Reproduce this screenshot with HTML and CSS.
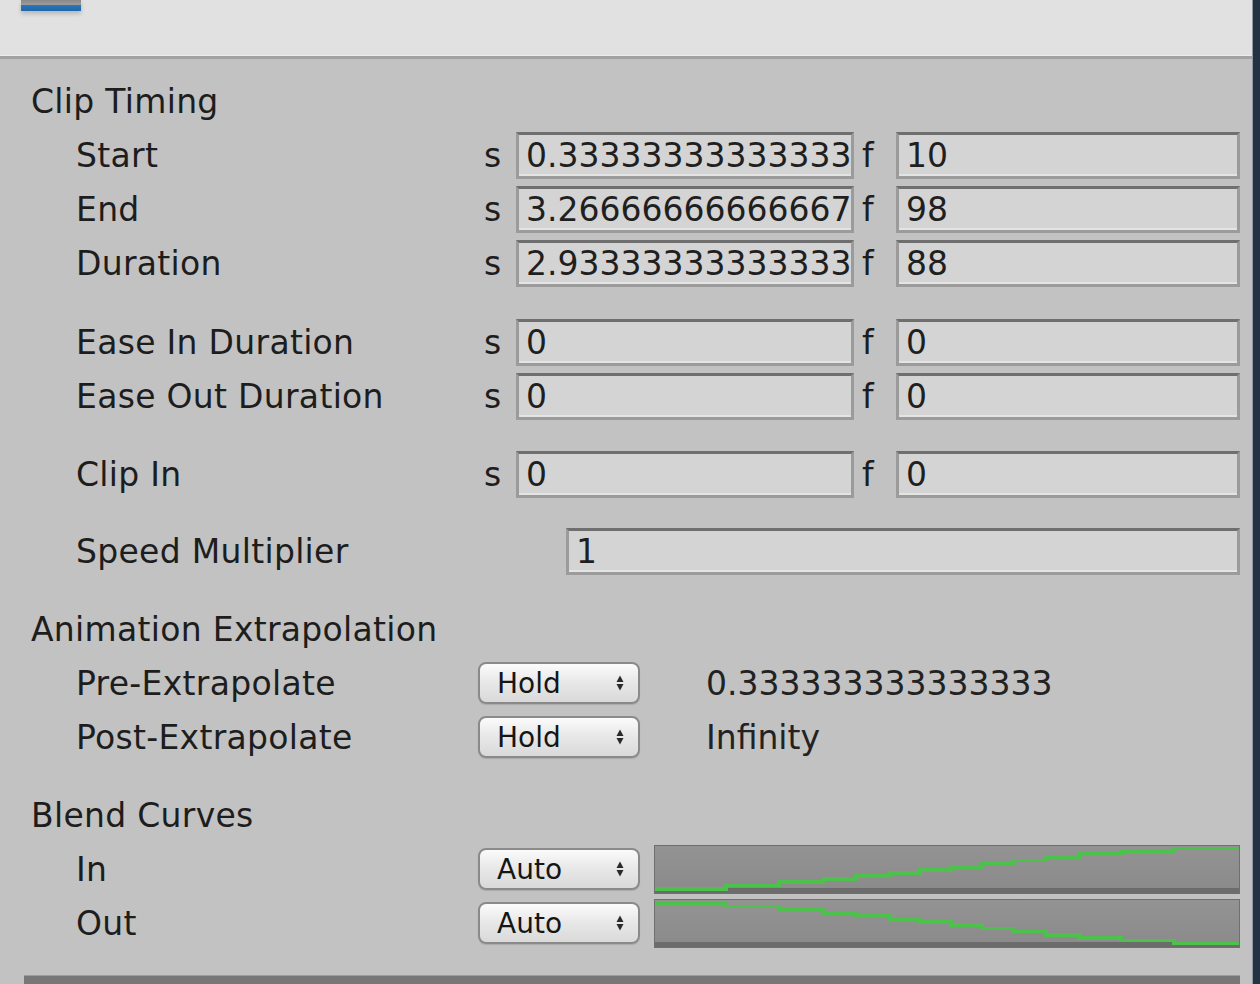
FILE: index.html
```html
<!DOCTYPE html>
<html lang="en">
<head>
<meta charset="utf-8">
<title>Clip Inspector</title>
<link rel="stylesheet" href="styles.css">
</head>
<body>
<div class="window">
  <div class="main">
    <div class="topbar"><div class="tab-icon"></div></div>
    <div class="divider"></div>
    <div class="inspector">
      <div class="group">
        <div class="row header">Clip Timing</div>
        <div class="row">
          <span class="label">Start</span><span class="unit">s</span>
          <div class="field sec"><span class="clip">0.333333333333333</span></div>
          <span class="unit frame">f</span><div class="field grow">10</div>
        </div>
        <div class="row">
          <span class="label">End</span><span class="unit">s</span>
          <div class="field sec"><span class="clip">3.26666666666667</span></div>
          <span class="unit frame">f</span><div class="field grow">98</div>
        </div>
        <div class="row">
          <span class="label">Duration</span><span class="unit">s</span>
          <div class="field sec"><span class="clip">2.93333333333333</span></div>
          <span class="unit frame">f</span><div class="field grow">88</div>
        </div>
      </div>
      <div class="group g25">
        <div class="row">
          <span class="label">Ease In Duration</span><span class="unit">s</span>
          <div class="field sec">0</div>
          <span class="unit frame">f</span><div class="field grow">0</div>
        </div>
        <div class="row">
          <span class="label">Ease Out Duration</span><span class="unit">s</span>
          <div class="field sec">0</div>
          <span class="unit frame">f</span><div class="field grow">0</div>
        </div>
      </div>
      <div class="group g24">
        <div class="row">
          <span class="label">Clip In</span><span class="unit">s</span>
          <div class="field sec">0</div>
          <span class="unit frame">f</span><div class="field grow">0</div>
        </div>
      </div>
      <div class="group g23">
        <div class="row">
          <span class="label wide">Speed Multiplier</span>
          <div class="field grow">1</div>
        </div>
      </div>
      <div class="group g24">
        <div class="row header">Animation Extrapolation</div>
        <div class="row">
          <span class="label narrow">Pre-Extrapolate</span>
          <div class="popup"><span>Hold</span><svg class="arrows" width="10" height="18" viewBox="0 0 10 18"><polygon points="1.5,8 5,1.5 8.5,8"/><polygon points="1.5,10 5,16.5 8.5,10"/></svg></div>
          <span class="value">0.333333333333333</span>
        </div>
        <div class="row">
          <span class="label narrow">Post-Extrapolate</span>
          <div class="popup"><span>Hold</span><svg class="arrows" width="10" height="18" viewBox="0 0 10 18"><polygon points="1.5,8 5,1.5 8.5,8"/><polygon points="1.5,10 5,16.5 8.5,10"/></svg></div>
          <span class="value">Infinity</span>
        </div>
      </div>
      <div class="group g24">
        <div class="row header">Blend Curves</div>
        <div class="row">
          <span class="label narrow">In</span>
          <div class="popup"><span>Auto</span><svg class="arrows" width="10" height="18" viewBox="0 0 10 18"><polygon points="1.5,8 5,1.5 8.5,8"/><polygon points="1.5,10 5,16.5 8.5,10"/></svg></div>
          <div class="curve">
            <svg class="curve-svg" viewBox="0 0 584 46" preserveAspectRatio="none">
              <path d="M0 43 H71 V39.5 H124 V36 H168 V33 H201 V30 H235 V27 H265 V24 H296 V21 H327 V17.6 H358 V14.5 H391 V11 H424 V8 H466 V5.6 H519 V2.5 H584"/>
            </svg>
          </div>
        </div>
        <div class="row">
          <span class="label narrow">Out</span>
          <div class="popup"><span>Auto</span><svg class="arrows" width="10" height="18" viewBox="0 0 10 18"><polygon points="1.5,8 5,1.5 8.5,8"/><polygon points="1.5,10 5,16.5 8.5,10"/></svg></div>
          <div class="curve">
            <svg class="curve-svg" viewBox="0 0 584 46" preserveAspectRatio="none">
              <path d="M0 3 H71 V6.5 H124 V10 H168 V13 H201 V16 H235 V19 H265 V22 H296 V25 H327 V28.4 H358 V31.5 H391 V35 H424 V38 H466 V40.4 H519 V43.5 H584"/>
            </svg>
          </div>
        </div>
      </div>
    </div>
    <div class="footer-edge"></div>
  </div>
</div>
</body>
</html>
```

FILE: styles.css
```css
html, body {
  margin: 0;
  padding: 0;
  background: #243242;
}

.window {
  width: 1260px;
  height: 984px;
  display: flex;
  overflow: hidden;
  background: #243242;
}

.main {
  width: 1252px;
  height: 984px;
  display: flex;
  flex-direction: column;
  background: #c2c2c2;
  border-right: 1px solid #8e99a4;
  font-family: "DejaVu Sans", "Liberation Sans", sans-serif;
  color: #1d1d1d;
}

.topbar {
  height: 56px;
  flex: none;
  background: #e1e1e1;
  border-bottom: 1px solid #ececec;
  box-sizing: border-box;
}

.tab-icon {
  margin-left: 21px;
  width: 60px;
  height: 11px;
  background: linear-gradient(#8a8a8a 0, #9c9c9c 5px, #2b75b8 5px, #1f67ab 11px);
  box-shadow: 0 3px 4px rgba(0, 0, 0, 0.18);
}

.divider {
  height: 3px;
  flex: none;
  background: #a2a2a2;
}

.inspector {
  flex: 1;
  padding: 15px 12px 0 31px;
  font-size: 33px;
}

.group.g25 { margin-top: 25px; }
.group.g24 { margin-top: 24px; }
.group.g23 { margin-top: 23px; }

.row {
  height: 54px;
  display: flex;
  align-items: center;
  white-space: nowrap;
}

.row.header {
  letter-spacing: 0.3px;
}

.label {
  flex: none;
  width: 408px;
  margin-left: 45px;
  letter-spacing: 0.3px;
}

.label.wide { width: 490px; }
.label.narrow { width: 402px; }

.unit {
  flex: none;
  width: 32px;
}

.unit.frame {
  width: 34px;
  padding-left: 8px;
}

.field {
  height: 47px;
  box-sizing: border-box;
  display: flex;
  align-items: center;
  padding-left: 7px;
  overflow: hidden;
  background: #d4d4d4;
  border: 3px solid #9b9b9b;
  border-top-color: #6f6f6f;
  box-shadow: inset 0 -2px 0 #e4e4e4;
  color: #1f1f1f;
}

.field.sec {
  flex: none;
  width: 338px;
}

.field.grow {
  flex: 1;
}

.clip {
  display: block;
  max-width: 100%;
  overflow: hidden;
}

.popup {
  flex: none;
  width: 162px;
  height: 42px;
  box-sizing: border-box;
  display: flex;
  align-items: center;
  justify-content: space-between;
  padding: 0 13px 0 17px;
  border: 2px solid #8a8a8a;
  border-radius: 8px;
  background: linear-gradient(#fbfbfb, #e9e9e9 45%, #d9d9d9);
  box-shadow: 0 1px 1px rgba(0, 0, 0, 0.12);
  font-size: 28px;
  color: #151515;
}

.arrows {
  fill: #2a2a2a;
}

.value {
  margin-left: 66px;
  color: #222;
}

.curve {
  flex: 1;
  margin-left: 14px;
  height: 49px;
  box-sizing: border-box;
  border: 1px solid #6f6f6f;
  background: linear-gradient(#939393, #8b8b8b calc(100% - 5px), #6c6c6c calc(100% - 5px));
  display: flex;
}

.curve-svg {
  width: 100%;
  height: 46px;
}

.curve-svg path {
  fill: none;
  stroke: #4cc24c;
  stroke-width: 3.5;
  shape-rendering: crispEdges;
}

.footer-edge {
  flex: none;
  height: 8px;
  margin: 0 12px 0 24px;
  background: #777777;
  border-top: 1px solid #9c9c9c;
}
```
